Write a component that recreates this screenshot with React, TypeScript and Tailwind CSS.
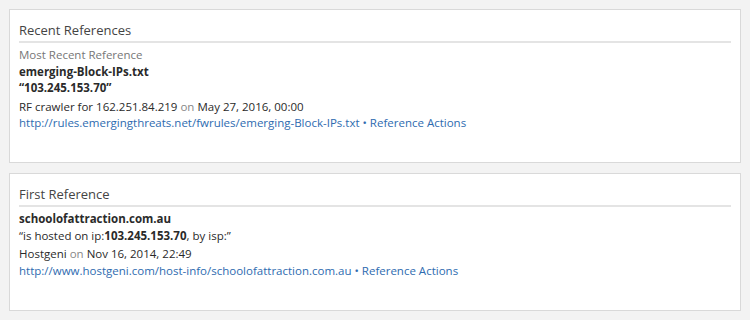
const FONT = "font-['Open_Sans','Liberation_Sans',sans-serif]";

type Ref = {
  title: string;
  label?: string;
  name: string;
  quote: React.ReactNode;
  source: string;
  date: string;
  url: string;
  height: string;
};

const REFS: Ref[] = [
  {
    title: "Recent References",
    label: "Most Recent Reference",
    name: "emerging-Block-IPs.txt",
    quote: <span className="font-bold">“103.245.153.70”</span>,
    source: "RF crawler for 162.251.84.219",
    date: "May 27, 2016, 00:00",
    url: "http://rules.emergingthreats.net/fwrules/emerging-Block-IPs.txt",
    height: "h-[154px]",
  },
  {
    title: "First Reference",
    name: "schoolofattraction.com.au",
    quote: (
      <span>
        “is hosted on ip:<span className="font-bold">103.245.153.70</span>, by isp:”
      </span>
    ),
    source: "Hostgeni",
    date: "Nov 16, 2014, 22:49",
    url: "http://www.hostgeni.com/host-info/schoolofattraction.com.au",
    height: "h-[138px]",
  },
];

const RefCard = ({ data }: { data: Ref }) => (
  <section className={`bg-white border border-[#d9d9d9] px-[9px] pt-[11px] shrink-0 ${data.height}`}>
    <h2 className="text-[13px] leading-[18px] text-[#444] pb-[2px] border-b-2 border-[#e4e4e4] font-normal">
      {data.title}
    </h2>
    <div className="mt-[4px] text-[11.5px] leading-[16.5px] text-[#2a2a2a]">
      {data.label && <div className="text-[#777]">{data.label}</div>}
      <div className="font-bold">{data.name}</div>
      <div>{data.quote}</div>
      <div className="mt-[2px]">
        {data.source} <span className="text-[#888]">on</span> {data.date}
      </div>
      <div className="leading-[16px]">
        <a href="#" className="text-[#2e6bb0]">{data.url}</a>
        <span className="text-[#2e6bb0]"> • </span>
        <a href="#" className="text-[#2e6bb0]">Reference Actions</a>
      </div>
    </div>
  </section>
);

export default function App() {
  return (
    <div className={`${FONT} bg-[#f3f3f3] w-[750px] h-[320px] pt-[9px] px-[9px] flex flex-col gap-[10px]`}>
      {REFS.map((r) => (
        <RefCard key={r.title} data={r} />
      ))}
    </div>
  );
}
